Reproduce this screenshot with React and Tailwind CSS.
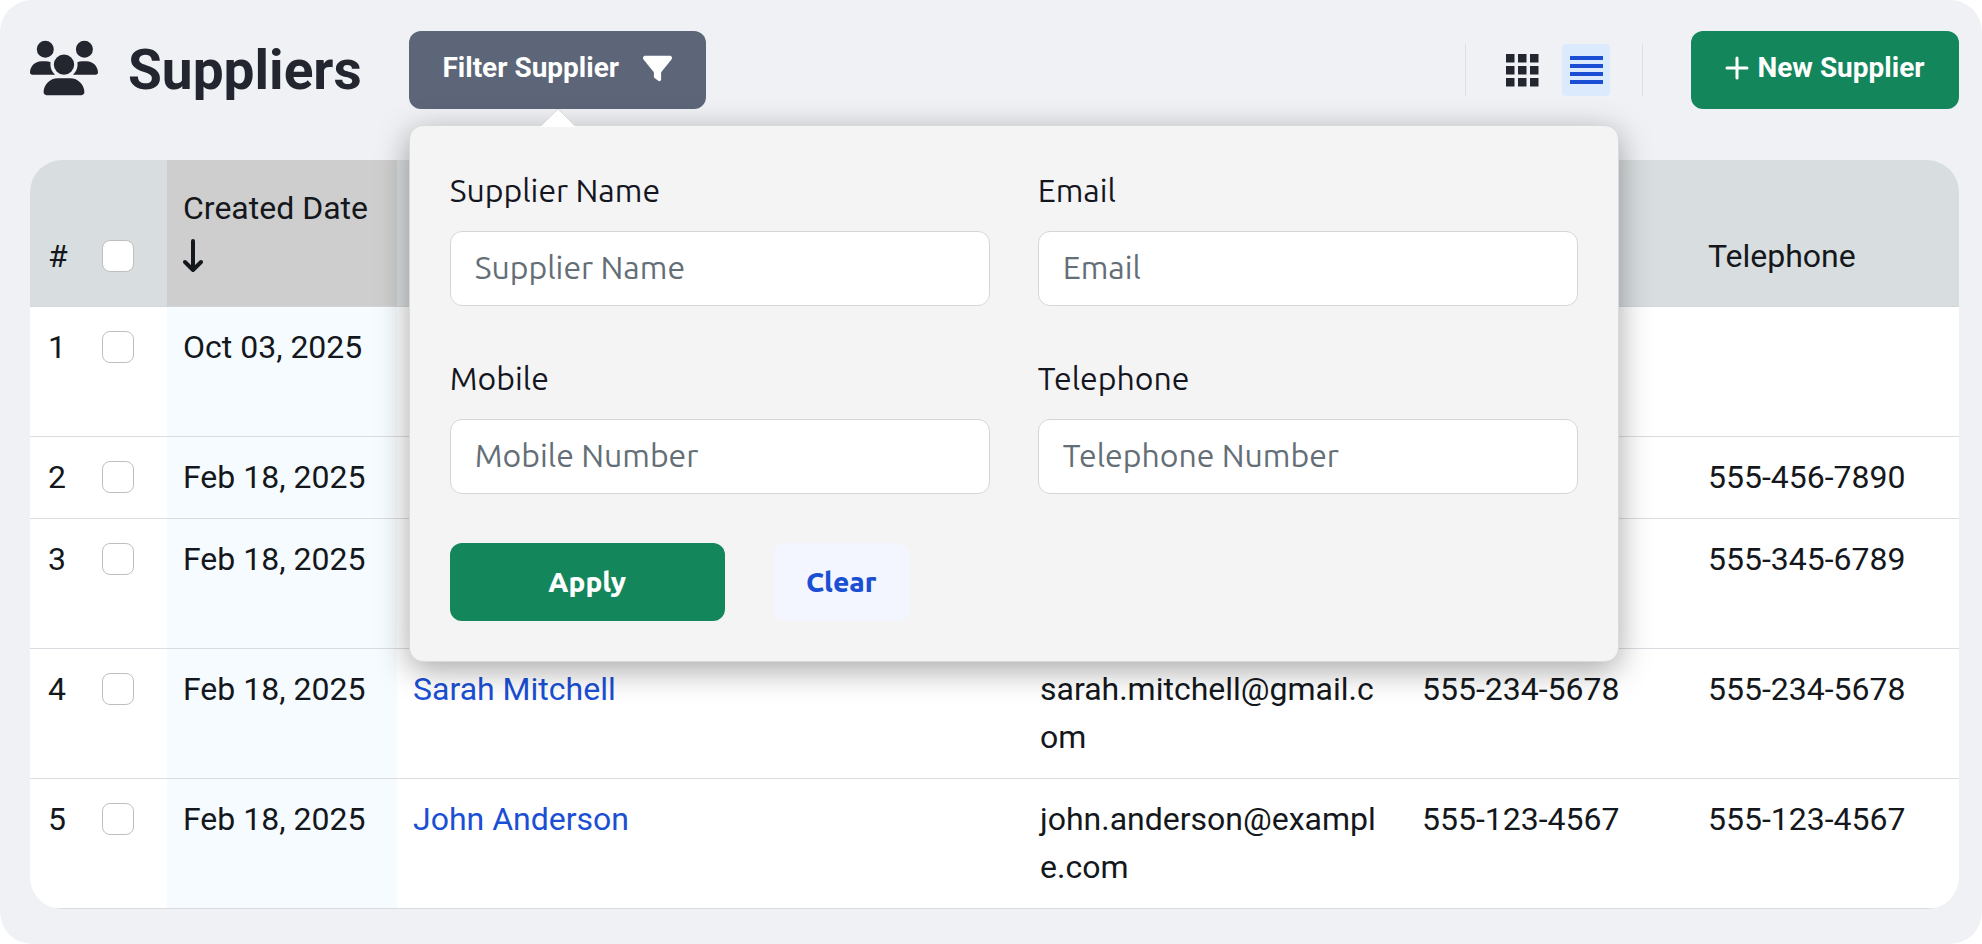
import { useState } from 'react';
import { FaFilter, FaUsers } from 'react-icons/fa6';

const suppliers = [
  { id: 1, date: 'Oct 03, 2025', name: '', email: '', mobile: '', telephone: '', tall: true },
  { id: 2, date: 'Feb 18, 2025', name: '', email: '', mobile: '555-456-7890', telephone: '555-456-7890' },
  { id: 3, date: 'Feb 18, 2025', name: '', email: '', mobile: '555-345-6789', telephone: '555-345-6789', tall: true },
  {
    id: 4,
    date: 'Feb 18, 2025',
    name: 'Sarah Mitchell',
    email: 'sarah.mitchell@gmail.com',
    mobile: '555-234-5678',
    telephone: '555-234-5678',
    tall: true,
  },
  {
    id: 5,
    date: 'Feb 18, 2025',
    name: 'John Anderson',
    email: 'john.anderson@example.com',
    mobile: '555-123-4567',
    telephone: '555-123-4567',
    tall: true,
  },
];

const filterFields = [
  { name: 'name', label: 'Supplier Name', placeholder: 'Supplier Name' },
  { name: 'email', label: 'Email', placeholder: 'Email' },
  { name: 'mobile', label: 'Mobile', placeholder: 'Mobile Number' },
  { name: 'telephone', label: 'Telephone', placeholder: 'Telephone Number' },
];

const emptyFilter = { name: '', email: '', mobile: '', telephone: '' };

function GridIcon() {
  return (
    <svg width="33" height="33" viewBox="0 0 33 33" fill="currentColor" aria-hidden="true">
      {[0, 12, 24].map((y) =>
        [0, 12, 24].map((x) => <rect key={`${x}-${y}`} x={x} y={y} width="8.5" height="8.5" />)
      )}
    </svg>
  );
}

function ListIcon() {
  return (
    <svg width="33" height="28" viewBox="0 0 33 28" fill="currentColor" aria-hidden="true">
      {[0, 8, 16, 24].map((y) => (
        <rect key={y} y={y} width="33" height="4" />
      ))}
    </svg>
  );
}

function PlusIcon() {
  return (
    <svg
      width="24"
      height="24"
      viewBox="0 0 24 24"
      fill="none"
      stroke="currentColor"
      strokeWidth="3"
      strokeLinecap="round"
      aria-hidden="true"
    >
      <path d="M12 2v20M2 12h20" />
    </svg>
  );
}

function ArrowDownIcon() {
  return (
    <svg
      width="20"
      height="34"
      viewBox="0 0 20 34"
      fill="none"
      stroke="currentColor"
      strokeWidth="4"
      strokeLinecap="round"
      strokeLinejoin="round"
      aria-hidden="true"
    >
      <path d="M10 2v29M2 23l8 8 8-8" />
    </svg>
  );
}

function RowCheckbox({ label }) {
  return (
    <input
      type="checkbox"
      aria-label={label}
      className="block size-8 appearance-none rounded-lg border border-[#bfbfbf] bg-white checked:bg-[#1d4ed8]"
    />
  );
}

function FilterPopover() {
  const [filter, setFilter] = useState(emptyFilter);

  const inputHandler = (event) => {
    const { name, value } = event.target;
    setFilter({ ...filter, [name]: value });
  };

  return (
    <div
      className="absolute left-0 top-full z-10 mt-4 w-[1210px] rounded-[14px] border border-[#d9dadb]
      bg-[#f4f4f4] font-['Ubuntu','Noto_Sans',sans-serif] shadow-[0_8px_32px_rgba(0,0,0,0.35)]"
    >
      <svg
        className="absolute -top-[18px] left-[130px]"
        width="36"
        height="19"
        viewBox="0 0 36 19"
        aria-hidden="true"
      >
        <path d="M0 19L18 1l18 18z" fill="#fff" />
        <path d="M1 18L18 1l17 17" fill="none" stroke="#d9dadb" />
      </svg>
      <form onSubmit={(event) => event.preventDefault()} className="p-10">
        <div className="grid grid-cols-2 gap-12">
          {filterFields.map((field) => (
            <div key={field.name}>
              <label
                htmlFor={`filter-${field.name}`}
                className="mb-[17px] block text-[32px] font-[450] leading-[48px] text-[#14161f]"
              >
                {field.label}
              </label>
              <input
                id={`filter-${field.name}`}
                type="text"
                name={field.name}
                placeholder={field.placeholder}
                value={filter[field.name]}
                onChange={inputHandler}
                className="block h-[75px] w-full rounded-xl border border-[#d3d7da] bg-white px-6 pb-1 text-[32px]
                font-[450] text-[#14161f] outline-none placeholder:text-[#636e76]"
              />
            </div>
          ))}
        </div>
        <div className="mt-[49px] flex gap-12">
          <button
            type="submit"
            className="h-[78px] w-[275px] rounded-xl bg-[#14865c] text-[28px] font-extrabold text-white"
          >
            Apply
          </button>
          <button
            type="button"
            onClick={() => setFilter(emptyFilter)}
            className="h-[78px] w-[137px] rounded-xl bg-[#f4f6ff] text-[28px] font-extrabold text-[#1b4fd3]"
          >
            Clear
          </button>
        </div>
      </form>
    </div>
  );
}

function Header() {
  return (
    <header className="flex h-[78px] items-center">
      <FaUsers className="mb-1 size-[68px] text-[#23262f]" />
      <h1 className="ml-[30px] text-[55px] font-bold leading-[60px] text-[#23262f]">Suppliers</h1>
      <div className="relative ml-[47px]">
        <button
          type="button"
          className="flex h-[78px] w-[297px] items-center justify-center gap-6 rounded-xl bg-[#5d6678]
          pb-1 text-[28px] font-bold text-white"
        >
          Filter Supplier
          <FaFilter className="size-[29px]" />
        </button>
        <FilterPopover />
      </div>
      <div className="ml-auto flex h-[52px] items-center gap-4 border-x border-[#dcdfe3] px-8 text-[#23262f]">
        <button type="button" aria-label="Grid view" className="flex h-[52px] w-12 items-center justify-center">
          <GridIcon />
        </button>
        <button
          type="button"
          aria-label="List view"
          className="flex h-[52px] w-12 items-center justify-center rounded bg-[#dbebfd] text-[#1b4fd3]"
        >
          <ListIcon />
        </button>
      </div>
      <button
        type="button"
        className="ml-12 flex h-[78px] w-[268px] items-center justify-center gap-2 rounded-xl bg-[#14865c]
        pb-1 text-[28px] font-bold text-white"
      >
        <PlusIcon />
        New Supplier
      </button>
    </header>
  );
}

function SupplierTable() {
  return (
    <div className="mt-[51px] overflow-hidden rounded-[32px] bg-white">
      <table className="w-full table-fixed border-separate border-spacing-0 text-[32px] leading-[48px] text-[#14181c]">
        <colgroup>
          <col className="w-[56px]" />
          <col className="w-[81px]" />
          <col className="w-[230px]" />
          <col />
          <col className="w-[382px]" />
          <col className="w-[286px]" />
          <col className="w-[267px]" />
        </colgroup>
        <thead>
          <tr className="bg-[#d8dddf] text-left align-bottom [&>th]:border-b [&>th]:border-[#d3d6d9] [&>th]:pb-[26px] [&>th]:pt-6 [&>th]:font-normal">
            <th className="pl-[18px]">#</th>
            <th className="pl-4">
              <div className="flex h-12 items-center">
                <RowCheckbox label="Select all suppliers" />
              </div>
            </th>
            <th className="bg-[#cecece] pl-4">
              Created Date
              <div className="flex h-12 items-center">
                <ArrowDownIcon />
              </div>
            </th>
            <th />
            <th />
            <th />
            <th className="pl-4">Telephone</th>
          </tr>
        </thead>
        <tbody>
          {suppliers.map((supplier) => (
            <tr
              key={supplier.id}
              className={`align-top [&>td]:border-b [&>td]:border-[#d9dce0] [&>td]:pb-[17px] [&>td]:pt-4 ${
                supplier.tall ? 'h-[130px]' : 'h-[82px]'
              }`}
            >
              <td className="pl-[18px]">{supplier.id}</td>
              <td className="pl-4">
                <div className="flex h-12 items-center">
                  <RowCheckbox label={`Select supplier ${supplier.id}`} />
                </div>
              </td>
              <td className="bg-[#f6fbff] pl-4">{supplier.date}</td>
              <td className="px-4">
                {supplier.name && (
                  <a href="#supplier" className="text-[#1b4fd3]">
                    {supplier.name}
                  </a>
                )}
              </td>
              <td className="break-all px-4">{supplier.email}</td>
              <td className="pl-4">{supplier.mobile}</td>
              <td className="pl-4">{supplier.telephone}</td>
            </tr>
          ))}
        </tbody>
      </table>
    </div>
  );
}

export default function App() {
  return (
    <div className="bg-white">
      <main className="min-h-screen rounded-[32px] bg-[#eff1f5] pb-[34px] pl-[30px] pr-[23px] pt-[31px] font-['Roboto',sans-serif]">
        <Header />
        <SupplierTable />
      </main>
    </div>
  );
}
